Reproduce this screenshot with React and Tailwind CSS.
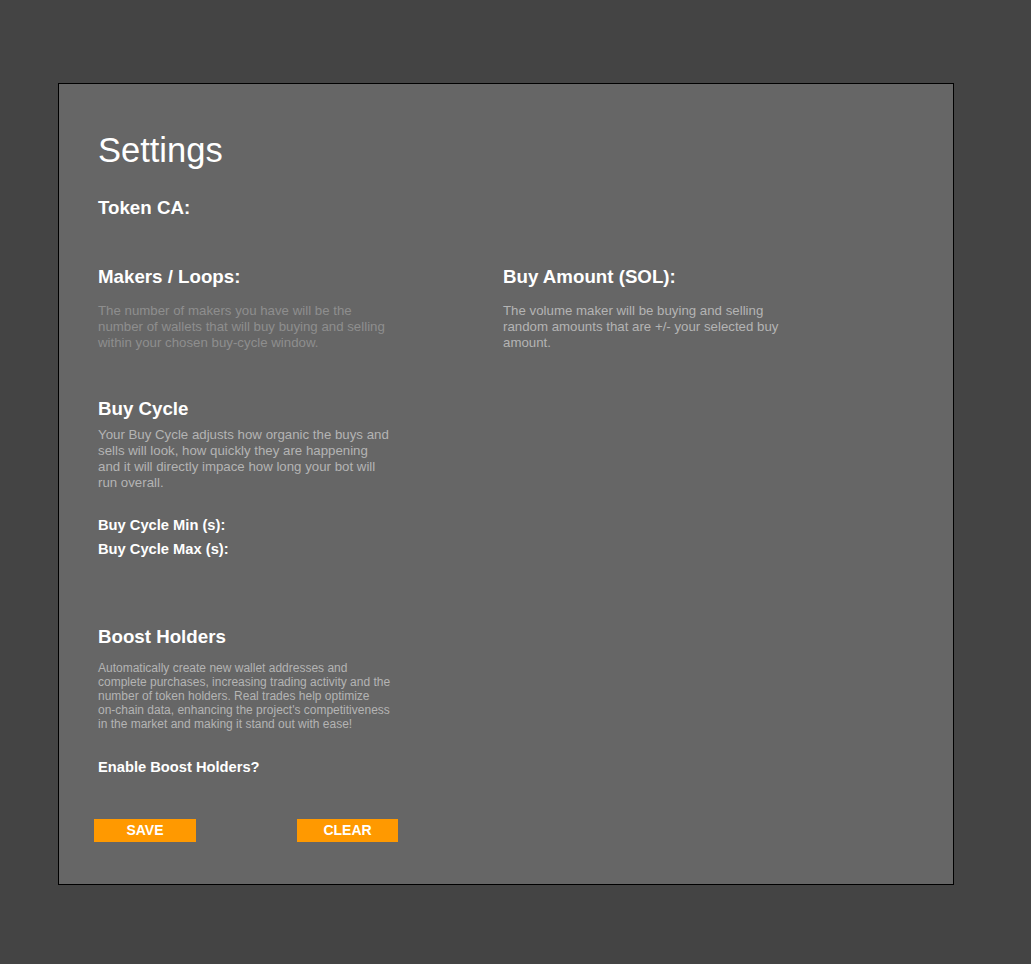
export default function App() {
  return (
    <div className="min-h-[964px] w-full bg-[#444444] pt-[83px] pl-[58px]" style={{ fontFamily: '"Liberation Sans", Arial, sans-serif' }}>
      <div className="w-[896px] h-[802px] border border-black bg-[#666666] pl-[39px] pt-[46px] text-white">
        <h1 className="text-[34.5px] leading-[40px] font-normal">Settings</h1>
        <h3 className="mt-[27px] text-[18.72px] leading-[22px] font-bold">Token CA:</h3>

        <div className="mt-[47px] grid grid-cols-[405px_1fr]">
          <div>
            <h3 className="text-[18.72px] leading-[22px] font-bold">Makers / Loops:</h3>
            <p className="mt-[15px] w-[294px] text-[13.28px] leading-[16px] text-[#8e8e8e]">
              The number of makers you have will be the number of wallets that will buy buying and selling within your chosen buy-cycle window.
            </p>
          </div>
          <div>
            <h3 className="text-[18.72px] leading-[22px] font-bold">Buy Amount (SOL):</h3>
            <p className="mt-[15px] w-[294px] text-[13.28px] leading-[16px] text-[#b4b4b4]">
              The volume maker will be buying and selling random amounts that are +/- your selected buy amount.
            </p>
          </div>
        </div>

        <h3 className="mt-[47px] text-[18.72px] leading-[22px] font-bold">Buy Cycle</h3>
        <p className="mt-[7px] w-[294px] text-[13.28px] leading-[16px] text-[#b4b4b4]">
          Your Buy Cycle adjusts how organic the buys and sells will look, how quickly they are happening and it will directly impace how long your bot will run overall.
        </p>
        <div className="mt-[22px] text-[14.7px] leading-[24px] font-bold">Buy Cycle Min (s):</div>
        <div className="text-[14.7px] leading-[24px] font-bold">Buy Cycle Max (s):</div>

        <h3 className="mt-[65px] text-[18.72px] leading-[22px] font-bold">Boost Holders</h3>
        <p className="mt-[13px] w-[300px] text-[12px] leading-[14px] text-[#b4b4b4]">
          Automatically create new wallet addresses and complete purchases, increasing trading activity and the number of token holders. Real trades help optimize <span className="whitespace-nowrap">on-chain</span> data, enhancing the project's competitiveness in the market and making it stand out with ease!
        </p>
        <div className="mt-[26px] text-[14.7px] leading-[20px] font-bold">Enable Boost Holders?</div>

        <div className="mt-[42px] -ml-[4px] flex gap-[101px]">
          <button className="w-[102px] h-[23px] bg-[#ff9900] text-white font-bold text-[14px] leading-[23px] text-center">SAVE</button>
          <button className="w-[101px] h-[23px] bg-[#ff9900] text-white font-bold text-[14px] leading-[23px] text-center">CLEAR</button>
        </div>
      </div>
    </div>
  );
}
